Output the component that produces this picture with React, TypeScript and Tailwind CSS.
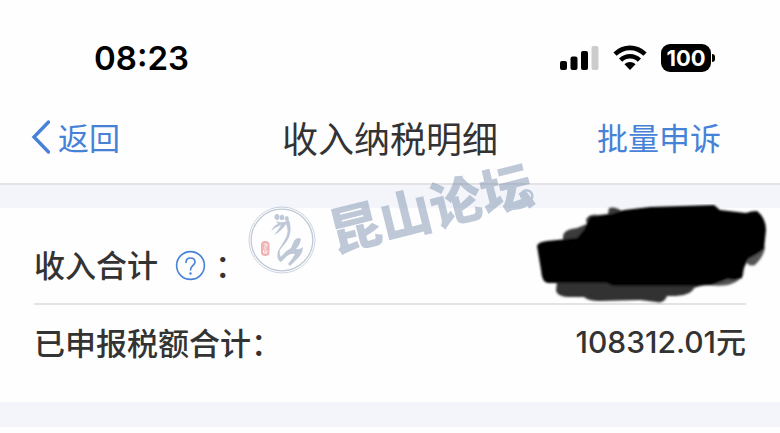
import React from 'react';

const SignalIcon = () => (
  <svg className="w-[39px] h-6" viewBox="0 0 39 24" aria-hidden="true">
    <rect x="0" y="15" width="7" height="9" rx="2" fill="#000" />
    <rect x="10.5" y="10.5" width="7" height="13.5" rx="2" fill="#000" />
    <rect x="21" y="5" width="7" height="19" rx="2" fill="#000" />
    <rect x="31.5" y="0" width="7" height="24" rx="2" fill="#ccc" />
  </svg>
);

const WifiIcon = () => (
  <svg className="w-[34px] h-[26px]" viewBox="0 0 34 26" aria-hidden="true">
    <g fill="none" stroke="#000" strokeWidth="4.6">
      <path d="M2 9.2C10.5 .8 23.500 .8 32 9.2" />
      <path d="M7.600 15.200C13 10 21 10 26.400 15.200" />
    </g>
    <path d="M11.500 19.200C14.600 16.400 19.400 16.400 22.500 19.200L17 25Z" fill="#000" />
  </svg>
);

const StatusBar = () => {
  return (
    <div className="flex items-center justify-between h-[94px] pt-[22px] pl-[94px] pr-[65px]">
      <span className="font-['Inter',sans-serif] text-[33px] leading-10 font-semibold text-black">08:23</span>
      <div className="flex items-center">
        <SignalIcon />
        <div className="ml-[14px] flex">
          <WifiIcon />
        </div>
        <div className="ml-[14px] flex items-center">
          <span className="flex items-center justify-center w-[50px] h-7 rounded-[9px] bg-black text-white font-['Inter',sans-serif] text-[22px] leading-7 font-bold">
            100
          </span>
          <span className="ml-px w-[3px] h-2 rounded-r-full bg-black" />
        </div>
      </div>
    </div>
  );
};

const NavBar = () => {
  return (
    <header className="grid grid-cols-[1fr_auto_1fr] items-center h-[91px] pb-1 px-[30px] border-b-2 border-[#e3e3e5]">
      <button type="button" className="flex items-center gap-2 justify-self-start text-[31px] leading-10 text-[#4682d8]">
        <svg className="w-5 h-[34px]" viewBox="0 0 20 34" fill="none" aria-hidden="true">
          <path d="M18.500 2L4 17L18.500 32" stroke="currentColor" strokeWidth="3.400" strokeLinecap="round" />
        </svg>
        返回
      </button>
      <h1 className="text-[36px] leading-9 font-normal text-[#333]">收入纳税明细</h1>
      <button type="button" className="justify-self-end mr-[29px] text-[31px] leading-10 text-[#4682d8]">
        批量申诉
      </button>
    </header>
  );
};

const Scribble = () => (
  <svg className="absolute -right-[22px] -top-1 w-[234px] h-[102px]" viewBox="534 204 234 102" role="img" aria-label="已隐藏金额">
    <defs>
      <filter id="soft" x="-5%" y="-5%" width="110%" height="110%">
        <feGaussianBlur stdDeviation="0.9" />
      </filter>
    </defs>
    <g filter="url(#soft)">
      <path d="M557 280L556 291Q558 297 570 297L584 297Q588 301 600 301L640 300L656 302Q664 304 667 296Q690 297 694 288L720 280H557Z" fill="#333" />
      <path d="M563 242V236Q564 229 577 228L587 224L586 220Q588 214 598 215L608 214L609 208Q615 206 622 211L600 245Z" fill="#3a3a3a" />
      <path d="M744 256Q746 268 755 265Q764 256 765 248L762 240ZM708 285Q738 289 744 272L730 275Z" fill="#555" />
      <path d="M537 246Q538 242 547 241L577 238L584 230L590 217L612 214L624 210L650 207L714 205L720 210L746 213Q751 211 757 211Q766 218 766 230L764 249Q758 254 748 259L744 268L742 278Q735 281 728 279L712 285L690 286H616Q611 286 607 283H548Q542 283 541 270Z" fill="#000" />
    </g>
  </svg>
);

const SummaryList = () => {
  return (
    <main className="bg-[#fefefe] h-[194px] px-[34px] text-[31px] text-[#333]">
      <div className="relative flex items-center h-[97px] pt-5 border-b-2 border-[#e3e3e3]">
        <span className="pb-0.5 font-medium">收入合计</span>
        <button type="button" aria-label="说明" className="ml-[17px] text-[#4682d8]">
          <svg className="w-[31px] h-[31px]" viewBox="0 0 31 31" fill="none" aria-hidden="true">
            <circle cx="15.500" cy="15.500" r="13.900" stroke="currentColor" strokeWidth="1.600" />
            <path d="M11 12.500C11 9.800 12.800 8 15.500 8C18.200 8 20 9.700 20 12C20 15.500 15.500 15.500 15.500 20" stroke="currentColor" strokeWidth="1.600" strokeLinecap="round" />
            <circle cx="15.500" cy="23.500" r="1.200" fill="currentColor" />
          </svg>
        </button>
        <span className="ml-[9px] pb-0.5 font-medium">：</span>
        <Scribble />
      </div>
      <div className="flex items-center justify-between h-[78px] pb-1">
        <span className="font-medium">已申报税额合计：</span>
        <span className="font-['Inter','Noto_Sans_CJK_SC',sans-serif] text-[30px] font-medium">108312.01元</span>
      </div>
    </main>
  );
};

const Watermark = () => {
  return (
    <div className="absolute left-[248px] top-[158px] w-[300px] h-[120px] pointer-events-none text-[#7389a8] opacity-45">
      <svg className="absolute left-0 top-12 w-[68px] h-[68px]" viewBox="0 0 68 68" fill="none" aria-hidden="true">
        <circle cx="34" cy="34" r="33" fill="#fff" stroke="currentColor" strokeWidth=".8" />
        <circle cx="34" cy="34" r="30.800" stroke="currentColor" strokeWidth="1.300" />
        <g fill="currentColor">
          <ellipse cx="29" cy="11" rx="2.500" ry="3" />
          <ellipse cx="34" cy="11.500" rx="2.300" ry="2.800" />
          <ellipse cx="38.800" cy="12.500" rx="2" ry="2.500" />
          <path d="M28 15Q34 18 41 14Q45 25 39 35L32 44Q31 48 33 51Q37 45 43 42L46 35Q49 30 53 33Q52 39 48 43Q51 44 55 41Q55 47 50 52L42 60L40 58Q45 52 47 48Q43 47 39 50L33 56Q28 54 30 45L36 35Q42 26 38 18Q34 25 26 29Q31 23 33 19Q28 21 23 25Q26 19 30 18Z" />
        </g>
        <rect x="13" y="35" width="8.500" height="15" rx="4" fill="#df5757" />
        <path d="M15.500 38H19V40H16M15.500 42L19 42M15.500 44V47H19V44M17.200 43V47" stroke="#fff" strokeWidth=".8" />
      </svg>
      <span className="absolute left-[78px] top-6 -rotate-14 font-black text-[52px] leading-[48px] whitespace-nowrap">
        昆山论坛
      </span>
      <svg className="absolute left-[252px] top-[26px] w-[36px] h-[28px]" viewBox="0 0 36 28" fill="none" aria-hidden="true">
        <path d="M6 25C16 25 28 25 32 14C34 5 22 4 21 11C21 15 27 15 27 11" stroke="currentColor" strokeWidth="2.500" strokeLinecap="round" />
      </svg>
    </div>
  );
};

const App = () => {
  return (
    <div className="relative overflow-hidden bg-[#fefefe] font-['Noto_Sans_CJK_SC',sans-serif]">
      <StatusBar />
      <NavBar />
      <div className="h-[23px] bg-[#f3f5fa]" />
      <SummaryList />
      <div className="h-[25px] bg-[#f3f5fa]" />
      <div className="h-[6px]" />
      <Watermark />
    </div>
  );
};

export default App;
